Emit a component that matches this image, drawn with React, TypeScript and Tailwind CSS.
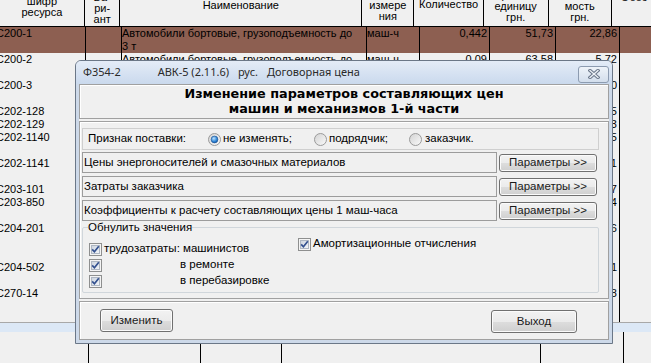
import React from 'react';

type Row = {
  code: string;
  name: string[];
  unit: string;
  qty: string;
  price: string;
  sum: string;
  lines: 1 | 2 | 3;
  sel?: boolean;
};

const rows: Row[] = [
  { code: 'С200-1', name: ['Автомобили бортовые, грузоподъемность до', '3 т'], unit: 'маш-ч', qty: '0,442', price: '51,73', sum: '22,86', lines: 2, sel: true },
  { code: 'С200-2', name: ['Автомобили бортовые, грузоподъемность до', '5 т'], unit: 'маш-ч', qty: '0,09', price: '63,58', sum: '5,72', lines: 2 },
  { code: 'С200-3', name: ['Автомобили бортовые, грузоподъемность до', '8 т'], unit: 'маш-ч', qty: '0,12', price: '84,19', sum: '10,10', lines: 2 },
  { code: 'С202-128', name: ['Краны на автомобильном ходу, 10 т'], unit: 'маш-ч', qty: '0,07', price: '95,06', sum: '6,65', lines: 1 },
  { code: 'С202-129', name: ['Краны на автомобильном ходу, 16 т'], unit: 'маш-ч', qty: '0,03', price: '117,77', sum: '3,53', lines: 1 },
  { code: 'С202-1140', name: ['Краны на гусеничном ходу, грузоподъемность', 'до 16 т'], unit: 'маш-ч', qty: '0,02', price: '107,45', sum: '2,15', lines: 2 },
  { code: 'С202-1141', name: ['Краны на гусеничном ходу, грузоподъемность', 'до 25 т'], unit: 'маш-ч', qty: '0,06', price: '140,11', sum: '8,41', lines: 2 },
  { code: 'С203-101', name: ['Автопогрузчики 5 т'], unit: 'маш-ч', qty: '0,02', price: '58,36', sum: '1,17', lines: 1 },
  { code: 'С203-850', name: ['Погрузчики одноковшовые универсальные', 'фронтальные пневмоколесные'], unit: 'маш-ч', qty: '0,01', price: '94,24', sum: '0,94', lines: 2 },
  { code: 'С204-201', name: ['Тракторы на гусеничном ходу', 'с лебедкой 132 кВт', '(180 л.с.)'], unit: 'маш-ч', qty: '0,03', price: '135,22', sum: '4,06', lines: 3 },
  { code: 'С204-502', name: ['Тягачи седельные, грузоподъемность', '12 т'], unit: 'маш-ч', qty: '0,14', price: '87,94', sum: '12,31', lines: 2 },
  { code: 'С270-14', name: ['Полуприцепы общего назначения,', 'грузоподъемность 12 т'], unit: 'маш-ч', qty: '0,08', price: '11,02', sum: '0,88', lines: 2 },
];

const rowH = { 1: 'h-[13px]', 2: 'h-[26px]', 3: 'h-[39px]' };

const Radio = ({ on }: { on?: boolean }) => (
  <svg width="13" height="13" viewBox="0 0 13 13" className="shrink-0">
    <defs>
      <linearGradient id="rOff" x1="0" y1="0" x2="1" y2="1">
        <stop offset="0" stopColor="#d2d2d2" />
        <stop offset="1" stopColor="#fbfbfb" />
      </linearGradient>
      <radialGradient id="rOn" cx="0.4" cy="0.35" r="0.75">
        <stop offset="0" stopColor="#bfe3ff" />
        <stop offset="0.6" stopColor="#2f86d6" />
        <stop offset="1" stopColor="#0f4f9c" />
      </radialGradient>
    </defs>
    <circle cx="6.5" cy="6.5" r="6" fill="url(#rOff)" stroke="#9a9a9a" />
    {on && <circle cx="6.5" cy="6.5" r="3.4" fill="url(#rOn)" stroke="#1d4f8e" strokeWidth="0.6" />}
  </svg>
);

const Check = () => (
  <svg width="13" height="13" viewBox="0 0 13 13" className="shrink-0">
    <defs>
      <linearGradient id="cIn" x1="0" y1="0" x2="1" y2="1">
        <stop offset="0" stopColor="#cbd3de" />
        <stop offset="1" stopColor="#f4f6f9" />
      </linearGradient>
    </defs>
    <rect x="0.5" y="0.5" width="12" height="12" fill="#f4f4f4" stroke="#8e8f8f" />
    <rect x="2.5" y="2.5" width="8" height="8" fill="url(#cIn)" stroke="#aeb6c2" />
    <path d="M3.2 6.4 L5.4 8.8 L9.8 3.2" stroke="#33508f" strokeWidth="1.7" fill="none" />
  </svg>
);

const Btn = ({ children, className }: { children: React.ReactNode; className: string }) => (
  <div
    className={`flex items-center justify-center rounded-[3px] border border-[#707070] bg-[linear-gradient(to_bottom,#f2f2f2_0%,#ebebeb_50%,#dddddd_51%,#cfcfcf_100%)] shadow-[inset_0_0_0_1px_#fbfbfb] text-[#1a1a1a] ${className}`}
  >
    {children}
  </div>
);

export default function App() {
  return (
    <div className="relative w-[651px] h-[363px] overflow-hidden bg-[#f0f0f0] font-['Liberation_Sans',Arial,sans-serif] text-[11px] text-black">
      {/* header */}
      <div className="flex h-[27px] border-b border-black overflow-hidden leading-[11px]">
        <div className="w-[86px] border-r border-black">
          <div className="-mt-[4px] flex flex-col items-center"><span>шифр</span><span>ресурса</span></div>
        </div>
        <div className="w-[36px] border-r border-black">
          <div className="-mt-[8px] flex flex-col items-center"><span>Ва-</span><span>ри-</span><span>ант</span></div>
        </div>
        <div className="w-[245px] border-r border-black">
          <div className="flex flex-col items-center"><span>Наименование</span></div>
        </div>
        <div className="w-[53px] border-r border-black">
          <div className="flex flex-col items-center"><span>измере</span><span>ния</span></div>
        </div>
        <div className="w-[70px] border-r border-black">
          <div className="-mt-[1px] flex flex-col items-center"><span>Количество</span></div>
        </div>
        <div className="w-[66px] border-r border-black">
          <div className="-mt-[10px] flex flex-col items-center"><span>Цена за</span><span>единицу</span><span>грн.</span></div>
        </div>
        <div className="w-[64px] border-r border-black">
          <div className="-mt-[10px] flex flex-col items-center"><span>Стои-</span><span>мость</span><span>грн.</span></div>
        </div>
        <div className="flex-1 pl-[9px]">
          <div className="-mt-[8px]">Обос-</div>
        </div>
      </div>

      {/* body rows */}
      <div className="h-[295px] overflow-hidden flex flex-col leading-[13px]">
        {rows.map((r) => (
          <div key={r.code} className={`flex shrink-0 ${rowH[r.lines]} ${r.sel ? 'bg-[#8d5f51]' : ''}`}>
            <div className="w-[86px] border-r border-black overflow-hidden whitespace-nowrap">
              <span className="-ml-[4px] block">{r.code}</span>
            </div>
            <div className="w-[36px] border-r border-black" />
            <div className="w-[245px] border-r border-black overflow-hidden whitespace-nowrap">
              {r.name.map((n) => (
                <div key={n}>{n}</div>
              ))}
            </div>
            <div className="w-[53px] border-r border-black overflow-hidden whitespace-nowrap">{r.unit}</div>
            <div className="w-[70px] border-r border-black text-right pr-[2px]">{r.qty}</div>
            <div className="w-[66px] border-r border-black text-right pr-[2px]">{r.price}</div>
            <div className="w-[64px] border-r border-black text-right pr-[2px]">{r.sum}</div>
            <div className="flex-1" />
          </div>
        ))}
        <div className="flex flex-1">
          <div className="w-[86px] border-r border-black" />
          <div className="w-[36px] border-r border-black" />
          <div className="w-[245px] border-r border-black" />
          <div className="w-[53px] border-r border-black" />
          <div className="w-[70px] border-r border-black" />
          <div className="w-[66px] border-r border-black" />
          <div className="w-[64px] border-r border-black" />
        </div>
      </div>

      {/* footer strip */}
      <div className="h-[10px] border-t border-[#a8a8a8] bg-[#dce8f6]" />
      <div className="flex h-[31px]">
        <div className="w-[89px] border-r border-black" />
        <div className="w-[112px] border-r border-black" />
        <div className="w-[81px] border-r border-black" />
        <div className="w-[259px] border-r border-black" />
        <div className="w-[83px] border-r border-black" />
      </div>

      {/* dialog window */}
      <div className="absolute left-[75px] top-[60px] w-[538px] h-[284px] rounded-t-[6px] border border-[#6b7787] bg-[#cdd9e9] flex flex-col">
        <div className="h-[23px] shrink-0 flex items-center rounded-t-[5px] bg-[linear-gradient(to_bottom,#e4ecf7,#cad9ed)] font-['Noto_Sans',sans-serif] text-[11px] text-[#2a2a2a]">
          <span className="ml-[7px]">Ф354-2</span>
          <span className="ml-[37px]">АВК-5 (2.11.6)</span>
          <span className="ml-[9px]">рус.</span>
          <span className="ml-[9px]">Договорная цена</span>
          <div className="ml-auto mr-[3px] mt-[3px] w-[31px] h-[17px] rounded-[3px] border border-[#8c9bb0] bg-[linear-gradient(to_bottom,#eef3f9,#d3deec)] flex items-center justify-center">
            <svg width="12" height="10" viewBox="0 0 12 10">
              <path d="M2 1.5 L10 8.5 M10 1.5 L2 8.5" stroke="#6a7689" strokeWidth="3.4" strokeLinecap="square" />
              <path d="M2 1.5 L10 8.5 M10 1.5 L2 8.5" stroke="#eef2f7" strokeWidth="1.3" strokeLinecap="square" />
            </svg>
          </div>
        </div>

        <div className="mx-[3px] h-[256px] bg-[#f0f0f0] flex flex-col gap-[2px] text-[11.5px]">
          {/* heading panel */}
          <div className="h-[35px] border border-[#a0a0a0] shadow-[inset_1px_1px_0_#ffffff] flex flex-col items-center pt-[1px] font-['DejaVu_Sans',Verdana,sans-serif] font-bold text-[12.8px] leading-[15px] text-black">
            <span>Изменение параметров составляющих цен</span>
            <span>машин и механизмов 1-й части</span>
          </div>

          {/* main panel */}
          <div className="h-[178px] border border-[#a0a0a0] shadow-[inset_1px_1px_0_#ffffff] pl-[2px] pt-[6px] flex flex-col">
            <div className="w-[517px] h-[22px] border border-[#cfcfcf] flex items-center pl-[5px]">
              <span className="w-[120px] shrink-0">Признак поставки:</span>
              <Radio on />
              <span className="ml-[2px] w-[91px] shrink-0">не изменять;</span>
              <Radio />
              <span className="ml-[2px] w-[80px] shrink-0">подрядчик;</span>
              <Radio />
              <span className="ml-[3px]">заказчик.</span>
            </div>

            <div className="mt-[2px] flex flex-col gap-[3px]">
              {[
                'Цены энергоносителей и смазочных материалов',
                'Затраты заказчика',
                'Коэффициенты к расчету составляющих цены 1 маш-часа',
              ].map((t) => (
                <div key={t} className="flex items-center h-[21px]">
                  <div className="w-[415px] h-[21px] border border-[#9c9c9c] flex items-center pl-[1px]">{t}</div>
                  <Btn className="ml-[2px] w-[98px] h-[18px]">Параметры &gt;&gt;</Btn>
                </div>
              ))}
            </div>

            <fieldset className="w-[517px] h-[72px] border border-[#d0d6db] rounded-[2px] pl-[6px] pr-0 pt-0 pb-0 m-0">
              <legend className="ml-[-1px] px-0 leading-[13px]">Обнулить значения</legend>
              <div className="flex">
                <div className="w-[209px] shrink-0 flex flex-col pt-[7px]">
                  <div className="h-[16px] flex items-center">
                    <Check />
                    <span className="ml-[2px]">трудозатраты: машинистов</span>
                  </div>
                  <div className="h-[16px] flex items-center">
                    <Check />
                    <span className="ml-[78px]">в ремонте</span>
                  </div>
                  <div className="h-[16px] flex items-center">
                    <Check />
                    <span className="ml-[78px]">в перебазировке</span>
                  </div>
                </div>
                <div className="mt-[2px] h-[16px] flex items-center">
                  <Check />
                  <span className="ml-[2px]">Амортизационные отчисления</span>
                </div>
              </div>
            </fieldset>
          </div>

          {/* bottom panel */}
          <div className="h-[39px] border border-[#a0a0a0] shadow-[inset_1px_1px_0_#ffffff] flex items-start pt-[7px]">
            <Btn className="ml-[20px] w-[73px] h-[23px]">Изменить</Btn>
            <Btn className="ml-auto mr-[31px] mt-[1px] w-[86px] h-[23px]">Выход</Btn>
          </div>
        </div>
      </div>
    </div>
  );
}
